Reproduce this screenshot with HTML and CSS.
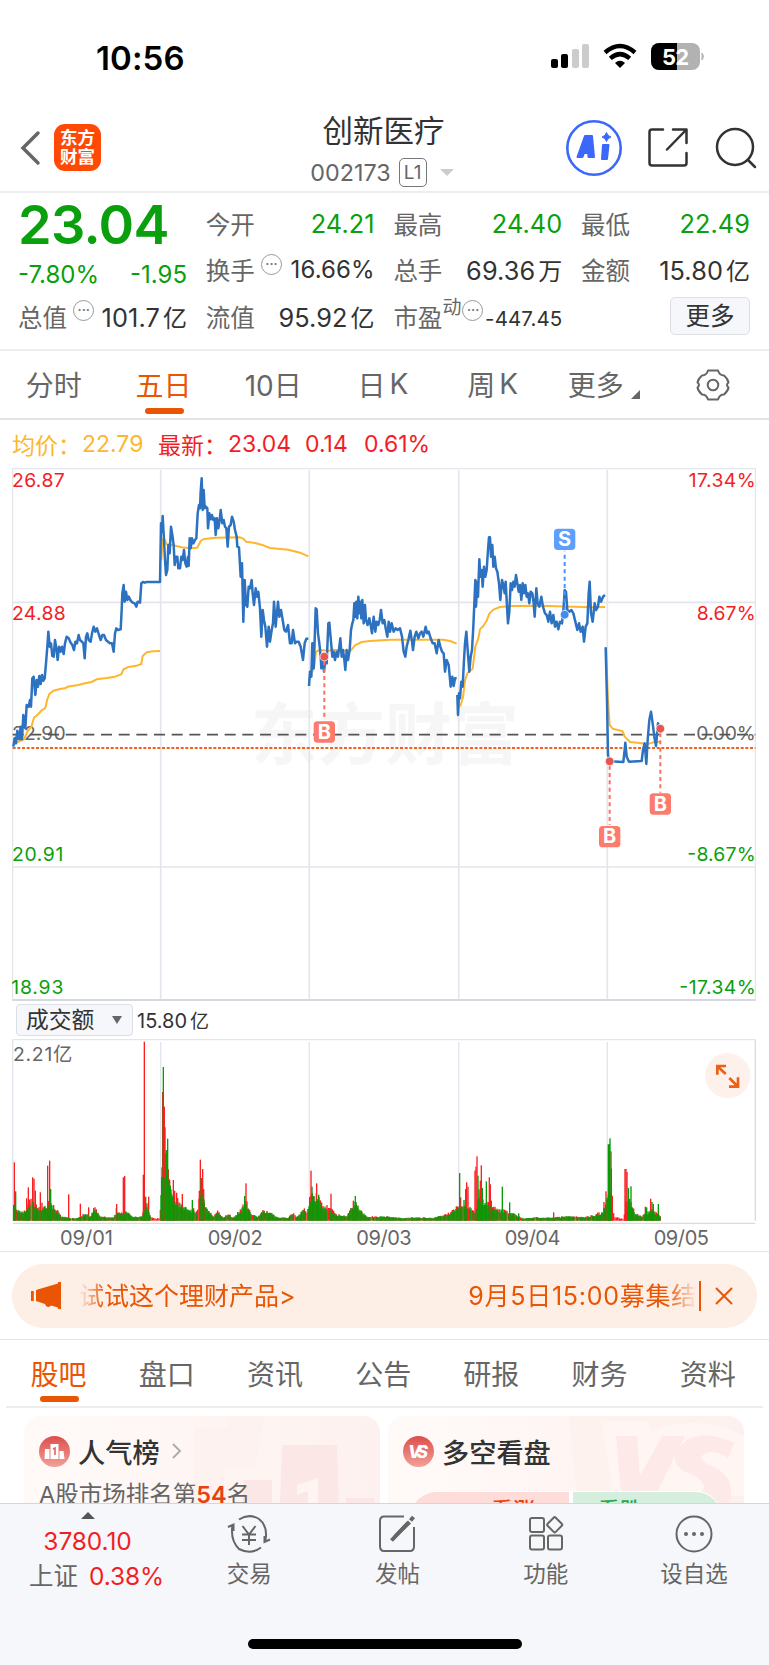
FILE: index.html
```html
<!DOCTYPE html>
<html lang="zh-CN">
<head>
    <meta charset="UTF-8">
    <meta name="viewport" content="width=device-width, initial-scale=1.0">
    <title>创新医疗 002173</title>
    <link rel="stylesheet" href="styles.css">
</head>
<body>

<div class="status-bar">
    <span class="time">10:56</span>
    <svg class="status-icons" width="156" height="32" viewBox="0 0 156 32">
        <rect x="0" y="18" width="7" height="9" rx="2"/>
        <rect x="10" y="13" width="7" height="14" rx="2"/>
        <rect x="21" y="8" width="7" height="19" rx="2" fill="#ccc"/>
        <rect x="31" y="3" width="7" height="24" rx="2" fill="#ccc"/>
        <g fill="none" stroke="#000" stroke-width="4.4">
            <path d="M54 11.500 Q69 -1.500 84 11.500"/>
            <path d="M59.300 17.300 Q69 9 78.700 17.300"/>
        </g>
        <path d="M64 22 Q69 17.500 74 22 L69 27 Z"/>
        <clipPath id="battery"><rect x="100" y="2" width="49" height="27" rx="8"/></clipPath>
        <g clip-path="url(#battery)">
            <rect x="100" y="2" width="49" height="27" fill="#b2b2b2"/>
            <rect x="100" y="2" width="26" height="27"/>
        </g>
        <path d="M151 12 Q154 15.500 151 19 Z" fill="#b2b2b2" stroke="#b2b2b2"/>
        <text x="111" y="23.500" class="battery-text" textLength="27">52</text>
    </svg>
</div>

<header class="header">
    <div class="header-left">
        <svg width="22" height="36" viewBox="0 0 22 36"><path d="M19 3 L4 18 L19 33" fill="none" stroke="#666" stroke-width="3.500" stroke-linecap="round"/></svg>
        <div class="logo">东方<br>财富</div>
    </div>
    <div class="header-title">
        <h1>创新医疗</h1>
        <div class="code"><span>002173</span><b>L1</b><i></i></div>
    </div>
    <div class="header-right">
        <svg width="56" height="56" viewBox="0 0 56 56">
            <circle cx="28" cy="28" r="26.700" fill="#fff" stroke="#3a68fb" stroke-width="2.600"/>
            <g fill="#3a68fb" stroke="#3a68fb" stroke-width="2" stroke-linejoin="round">
                <path fill-rule="evenodd" d="M11.500 37 L19 16 H26 L28 37 H22.500 L22.200 33 H18 L16.500 37 Z M20.500 28.500 H22 L21.800 24.500 Z"/>
                <path d="M37 25 H42.500 L41 39 H36 Z"/>
            </g>
            <path d="M40.500 12.500 Q41.500 16 45 17 Q41.500 18 40.500 21.500 Q39.500 18 36 17 Q39.500 16 40.500 12.500 Z" fill="#3a68fb" stroke="#3a68fb"/>
        </svg>
        <svg class="share" width="42" height="42" viewBox="0 0 42 42" fill="none" stroke="#333" stroke-width="2.500" stroke-linecap="round" stroke-linejoin="round">
            <path d="M16 2.500 H5 Q2.500 2.500 2.500 5 V36 Q2.500 38.500 5 38.500 H37 Q39.500 38.500 39.500 36 V26 M26 2.500 H39.500 V16 M39.500 2.500 L20 22.500"/>
        </svg>
        <svg width="42" height="42" viewBox="0 0 42 42" fill="none" stroke="#333" stroke-width="2.500" stroke-linecap="round">
            <circle cx="20" cy="20" r="18"/><path d="M33 33 L40 40"/>
        </svg>
    </div>
</header>

<section class="quote">
    <div class="price">23.04</div>
    <div class="cell green"><label>今开</label><span>24.21</span></div>
    <div class="cell green"><label>最高</label><span>24.40</span></div>
    <div class="cell green"><label>最低</label><span>22.49</span></div>

    <div class="cell change"><span>-7.80%</span><span>-1.95</span></div>
    <div class="cell small"><label>换手<em>···</em></label><span>16.66%</span></div>
    <div class="cell"><label>总手</label><span>69.36<small>万</small></span></div>
    <div class="cell"><label>金额</label><span>15.80<small>亿</small></span></div>

    <div class="cell"><label>总值<em>···</em></label><span>101.7<small>亿</small></span></div>
    <div class="cell"><label>流值</label><span>95.92<small>亿</small></span></div>
    <div class="cell pe"><label>市盈<sup>动</sup><em>···</em></label><span>-447.45</span></div>
    <div class="cell more"><button>更多</button></div>
</section>

<nav class="period-tabs">
    <a>分时</a>
    <a class="active">五日</a>
    <a>10日</a>
    <a>日<span>K</span></a>
    <a>周<span>K</span></a>
    <a class="dropdown">更多</a>
    <a>
        <svg width="34" height="34" viewBox="0 0 34 34" fill="none" stroke="#666" stroke-width="2" stroke-linejoin="round">
            <path d="M12 2.500 H22 Q23.500 7.500 28 7.500 Q32 11 32.500 14.500 Q29.500 17 32.500 19.500 Q32 23 28 26.500 Q23.500 26.500 22 31.500 H12 Q10.500 26.500 6 26.500 Q2 23 1.500 19.500 Q4.500 17 1.500 14.500 Q2 11 6 7.500 Q10.500 7.500 12 2.500 Z"/>
            <circle cx="17" cy="17" r="5.300"/>
        </svg>
    </a>
</nav>

<div class="legend">
    <span class="avg">均价：</span><span class="avg num1">22.79</span>
    <span class="last">最新：</span><span class="num2">23.04</span><span class="num3">0.14</span><span class="num4">0.61%</span>
</div>

<!-- 五日分时图 -->
<svg class="price-chart" width="769" height="533" viewBox="0 24 2307 1599">
    <text x="752" y="896" class="watermark" textLength="805">东方财富</text>
    <g stroke="#e2e5ec" fill="none" stroke-width="5">
        <path d="M38 24 V1623 M2266 24 V1623" stroke="#dde0e7" stroke-width="3"/>
        <path d="M38 25 H2266" stroke="#e6e7ec"/>
        <path d="M38 427 H2266 M38 1221 H2266 M482 30 V1616 M928 30 V1616 M1376 30 V1616 M1822 30 V1616" stroke-width="5"/>
        <path d="M38 1620 H2266" stroke="#d5d8df" stroke-width="6"/>
    </g>
    <g class="axis">
        <text x="36" y="82" fill="#f31e25" textLength="158">26.87</text>
        <text x="36" y="481" fill="#f31e25" textLength="161">24.88</text>
        <text x="36" y="840" fill="#666" textLength="161">22.90</text>
        <text x="36" y="1203" fill="#0a9f0d" textLength="154">20.91</text>
        <text x="34" y="1602" fill="#0a9f0d" textLength="156">18.93</text>
        <text x="2066" y="82" fill="#f31e25" textLength="201">17.34%</text>
        <text x="2090" y="481" fill="#f31e25" textLength="177">8.67%</text>
        <text x="2089" y="840" fill="#666" textLength="178">0.00%</text>
        <text x="2062" y="1203" fill="#0a9f0d" textLength="205">-8.67%</text>
        <text x="2038" y="1602" fill="#0a9f0d" textLength="229">-17.34%</text>
    </g>
    <path d="M38 824 H2266" stroke="#555" stroke-width="5" stroke-dasharray="33 20"/>
    <path d="M38 864 H2266" stroke="#ec6420" stroke-width="6" stroke-dasharray="9 5"/>

    <g fill="none" stroke="#fdb62e" stroke-width="6" stroke-linejoin="round">
        <polyline points="44,850 60,843 72,838 82,815 94,800 102,773 115,762 124,752 136,744 142,718 148,702 160,692 180,687 198,684 202,680 235,675 255,670 275,666 290,658 320,654 345,650 364,643 370,628 385,621 410,617 424,612 428,588 440,577 460,574 480,573"/>
        <polyline points="484,300 488,238 494,238 500,253 520,256 545,262 570,265 592,263 602,243 612,237 650,233 720,232 730,236 738,245 765,249 790,256 810,264 865,269 900,278 925,289"/>
        <g transform="translate(900)">
            <polyline points="27,660 33,640 42,625 48,575 60,570 85,572 100,569 135,572 152,572 165,556 185,546 210,543 270,539 430,539 450,543 470,551"/>
            <polyline points="472,745 482,735 489,712 495,662 503,638 518,626 526,560 535,535 540,508 550,498 560,482 568,461 580,449 600,441 640,438 720,437 820,440 880,442 915,441"/>
            <polyline points="918,562 924,720 929,795 938,806 968,814 974,830 990,846 1020,849 1040,853 1060,847 1080,845"/>
        </g>
    </g>
    <g fill="none" stroke="#2c72c0" stroke-width="7.500" stroke-linejoin="round">
        <polyline points="40,860 44,835 48,850 52,812 58,838 62,800 66,838 70,765 76,805 80,735 86,740 90,720 93,740 97,655 101,650 106,705 110,660 114,680 118,648 122,672 126,645 130,662 134,655 138,610 142,560 145,515 149,560 153,550 157,588 161,590 165,540 169,565 173,600 177,560 182,575 186,560 191,582 195,550 200,530 206,535 212,548 217,555 222,570 226,545 231,550 236,525 240,540 246,545 250,550 254,595 258,530 262,520 266,540 272,545 276,520 281,500 286,515 291,505 297,525 302,540 307,525 312,525 318,540 324,545 330,550 336,550 341,575 345,520 349,505 354,510 362,508 365,450 367,400 371,375 374,425 378,395 382,420 386,410 392,422 398,428 404,430 409,440 413,425 420,428 424,370 429,366 434,368 440,366 480,366 483,190 486,215 488,168 492,240 495,300 498,345 502,330 505,255 509,280 513,200 517,225 521,255 524,315 528,290 532,290 535,325 540,325 544,290 548,300 552,270 556,310 560,320 564,290 566,318 569,235 572,265 576,235 580,250 585,240 589,235 593,160 597,135 600,145 602,95 605,55 608,150 611,90 614,145 618,140 622,145 624,205 628,160 632,178 636,165 640,180 644,175 647,225 651,175 655,205 659,180 662,150 667,190 671,180 675,200 679,205 683,260 687,200 692,195 696,170 701,185 705,210 710,230 712,260 717,262 722,350 726,310 730,485 734,360 738,435 742,440 746,380 750,385 755,360 758,400 762,435 767,385 771,410 775,395 780,445 784,530 788,450 792,480 796,500 801,560 806,500 810,545 815,510 819,490 822,425 827,500 834,425 838,470 843,450 848,480 853,510 858,515 864,495 870,550 875,550 879,510 885,550 890,545 896,545 902,560 909,600 914,550 919,536 925,536"/>
        <g transform="translate(900)">
            <polyline points="27,678 30,635 34,650 37,550 41,625 44,540 47,445 50,448 54,520 58,550 62,590 64,625 68,600 72,635 76,600 80,610 85,490 88,488 93,545 97,590 101,575 105,600 110,575 114,590 118,560 121,535 125,590 129,570 133,600 136,630 140,570 144,600 149,570 153,510 157,490 160,480 163,430 166,470 169,425 172,475 175,410 179,460 181,425 184,475 187,420 191,490 195,435 198,480 203,495 208,475 212,495 216,520 221,470 226,515 230,485 235,495 239,480 243,450 248,490 253,480 257,505 262,530 266,485 270,515 275,490 281,515 287,505 293,510 300,505 306,530 311,575 316,590 320,560 325,540 331,512 336,545 339,570 344,530 349,515 355,535 360,520 365,515 370,530 377,500 381,520 386,515 392,535 398,550 404,550 410,580 416,540 421,560 426,575 431,580 435,635 440,600 446,615 452,680 457,650 461,678 465,655 470,655"/>
            <polyline points="472,705 474,765 477,700 480,715 484,665 488,680 492,600 495,550 499,515 503,570 508,635 512,590 516,570 520,500 523,430 526,360 528,440 532,365 534,410 538,298 541,350 545,330 548,380 552,320 556,350 560,330 564,270 567,232 570,232 573,290 577,255 580,320 584,290 588,325 592,335 597,370 601,420 606,360 610,375 614,400 617,365 621,440 624,490 628,455 632,370 636,390 640,365 644,380 648,345 652,370 656,395 660,375 664,420 668,370 672,400 676,375 680,410 684,400 688,430 692,395 697,400 701,430 704,470 709,385 713,430 718,440 724,410 729,440 735,460 740,465 745,485 750,455 755,490 760,465 765,500 770,485 775,508 780,485 786,490 791,440 794,390 798,395 802,450 808,455 814,450 820,460 826,485 832,510 837,490 842,515 848,500 852,545 857,500 862,490 866,400 869,365 873,460 878,485 884,430 888,450 894,440 898,410 903,425 909,410 915,405"/>
            <polyline points="917,562 921,720 924,885 929,904 970,906 974,870 976,848 980,890 987,905 1025,903 1029,870 1034,850 1039,912 1043,840 1048,780 1053,755 1058,790 1063,830 1068,858 1074,790 1078,800"/>
        </g>
    </g>

    <!-- 买卖点 -->
    <g transform="translate(900)" class="marks">
        <g class="buy">
            <path d="M73 604 V780 M929 917 V1095 M1081 819 V998"/>
            <circle cx="73" cy="590" r="13"/><circle cx="929" cy="904" r="13"/><circle cx="1081" cy="806" r="13"/>
            <rect x="41" y="784" width="64" height="64" rx="11"/><text x="73" y="836">B</text>
            <rect x="897" y="1098" width="64" height="64" rx="11"/><text x="929" y="1150">B</text>
            <rect x="1049" y="1000" width="64" height="64" rx="11"/><text x="1081" y="1052">B</text>
        </g>
        <g class="sell">
            <path d="M794 450 V272"/>
            <circle cx="794" cy="464" r="13"/>
            <rect x="762" y="206" width="64" height="64" rx="11"/><text x="794" y="259">S</text>
        </g>
    </g>
</svg>

<div class="volume-head">
    <button>成交额<i></i></button>
    <span>15.80<small>亿</small></span>
</div>

<!-- 成交额柱状图 -->
<svg class="volume-chart" width="769" height="212" viewBox="0 147 2307 636">
    <g stroke="#e2e5ec" fill="none" stroke-width="4">
        <path d="M38 149 H2266 M38 149 V692 M482 156 V692 M928 156 V692 M1376 156 V692 M1822 156 V692"/>
        <path d="M2266 149 V692 M38 700 H2266" stroke="#d8dbe1"/>
    </g>
    <g id="bars"></g>
    <g class="axis">
        <text x="39" y="213" fill="#666" textLength="178">2.21亿</text>
    </g>
    <g class="dates">
        <text x="180" y="765" textLength="159">09/01</text>
        <text x="623" y="765" textLength="165">09/02</text>
        <text x="1069" y="765" textLength="166">09/03</text>
        <text x="1514" y="765" textLength="167">09/04</text>
        <text x="1961" y="765" textLength="166">09/05</text>
    </g>
    <circle cx="2183" cy="257" r="68" fill="#fef1eb"/>
    <path d="M2152 254 V228 H2178 M2154 230 L2177 252 M2187 290 H2214 V262 M2212 288 L2188 264" fill="none" stroke="#ec6015" stroke-width="8"/>
</svg>

<div class="notice">
    <svg width="32" height="28" viewBox="0 0 32 28" fill="#ea5504"><path d="M0 9 H2.800 V19 H0 Z M5 8 L27 1.500 V0 H30 V27 H27 V25.500 L20 23.500 Q18 26 15 24 L14 22 L5 19 Z"/></svg>
    <p class="left-text">试试这个理财产品&gt;</p>
    <p class="right-text">9月5日15:00募集结</p>
    <svg class="close" width="20" height="20" viewBox="0 0 20 20"><path d="M2 2 L18 18 M18 2 L2 18" stroke="#ea5504" stroke-width="2"/></svg>
</div>

<nav class="info-tabs">
    <a class="active">股吧</a>
    <a>盘口</a>
    <a>资讯</a>
    <a>公告</a>
    <a>研报</a>
    <a>财务</a>
    <a>资料</a>
</nav>

<div class="cards">
    <div class="card">
        <svg class="card-bg" width="356" height="90" viewBox="0 0 356 90">
            <path d="M170 12 H204 V0 H240 L232 50 H200 V90 H170 Z M304 8 H332 L340 90 H308 Z" fill="#fdf2f0"/>
            <path d="M220 64 H248 V90 H218 Z M258 29 H313 L315 90 H256 Z M322 82 H350 V90 H322 Z" fill="#fbe7e5"/>
            <path d="M273 69 L294 62 V90 H284 V75 L273 79 Z" fill="#fef5f3"/>
        </svg>
        <h2>
            <svg width="31" height="31" viewBox="0 0 31 31">
                <linearGradient id="red" x2="0" y2="1"><stop stop-color="#db4f4b"/><stop offset="1" stop-color="#f2a099"/></linearGradient>
                <circle cx="15.500" cy="15.500" r="15.500" fill="url(#red)"/>
                <path d="M6 13 H10.500 V23 H5.500 Z M11.500 8 H19.500 V23 H11.500 Z M20.500 15 H24.500 L25.500 23 H20.500 Z" fill="#fff"/>
                <path d="M14 13 L16 12 V19" stroke="#dd6661" stroke-width="1.600" fill="none"/>
            </svg>
            人气榜
            <svg class="chevron" width="12" height="18" viewBox="0 0 12 18"><path d="M2 2 L9 9 L2 16" fill="none" stroke="#aaa" stroke-width="1.800"/></svg>
        </h2>
        <p>A股市场排名第<b>54</b>名</p>
    </div>
    <div class="card">
        <svg class="card-bg" width="356" height="90" viewBox="0 0 356 90">
            <path d="M181 0 H330 L356 24 V75 H188 Z" fill="#fef2ef"/>
            <path d="M213 5 H260 L264 16 Q310 -4 356 20 V80 H226 Z" fill="#fff6f3"/>
            <path d="M228 20 H249 L252 60 L274 20 H297 L262 90 H234 Z" fill="#fdeae8"/>
            <path d="M346 27 Q310 10 292 30 Q278 48 302 58 Q325 68 310 80 L340 90 Q350 64 328 52 Q302 42 322 36 Q330 35 340 42 Z" fill="#fdeae8"/>
        </svg>
        <h2>
            <svg width="31" height="31" viewBox="0 0 31 31">
                <circle cx="15.500" cy="15.500" r="15.500" fill="url(#red)"/>
                <text x="5" y="22" class="vs" textLength="20">VS</text>
            </svg>
            多空看盘
        </h2>
        <div class="vote"><span class="up">看涨</span><span class="down">看跌</span></div>
    </div>
</div>

<footer class="bottom-bar">
    <div class="index">
        <i></i>
        <strong>3780.10</strong>
        <div><span>上证</span><strong>0.38%</strong></div>
    </div>
    <div class="item">
        <svg width="44" height="40" viewBox="0 0 44 40" fill="none" stroke="#666" stroke-width="2">
            <path d="M12 5.500 Q22 -1 32 5 Q41 12 38.500 26 M43 25.500 L37.500 28 V22 M34 33.500 Q24 41 12 35 Q3 26 5.500 11 M1 13 L6.500 10.500 V17"/>
            <path d="M15.500 12 L22 20.500 L28.500 12 M22 20.500 V31 M15 20.500 H29 M15 26 H29"/>
        </svg>
        <span>交易</span>
    </div>
    <div class="item">
        <svg width="40" height="40" viewBox="0 0 40 40" fill="none" stroke="#666" stroke-width="2">
            <path d="M27 2.500 H7 Q3 2.500 3 7 V32 Q3 37 7 37 H33 Q37 37 37 32 V13"/>
            <path d="M31 6.500 L34 9.500 L19 24 L14.500 26.500 L17 21 Z" fill="#666" stroke="none"/><path d="M14.500 26.500 L31.500 8.500 M33.500 6.500 L36.500 3" stroke-width="4"/>
        </svg>
        <span>发帖</span>
    </div>
    <div class="item">
        <svg width="40" height="40" viewBox="0 0 40 40" fill="none" stroke="#666" stroke-width="2">
            <rect x="4" y="4" width="14" height="14" rx="2"/><rect x="4" y="21.500" width="14" height="14" rx="2"/><rect x="22" y="21.500" width="14" height="14" rx="2"/>
            <rect x="23" y="5" width="11.500" height="11.500" rx="1.500" transform="rotate(45 28.700 10.700)"/>
        </svg>
        <span>功能</span>
    </div>
    <div class="item">
        <svg width="40" height="40" viewBox="0 0 40 40" fill="none" stroke="#666" stroke-width="2">
            <circle cx="20" cy="20" r="17.500"/>
            <g fill="#666" stroke="none"><circle cx="12" cy="20" r="2"/><circle cx="20" cy="20" r="2"/><circle cx="28" cy="20" r="2"/></g>
        </svg>
        <span>设自选</span>
    </div>
    <div class="home-bar"></div>
</footer>

<script src="script.js"></script>
</body>
</html>
```
FILE: styles.css
```css
body {
    margin: 0;
    width: 769px;
    height: 1665px;
    display: flex;
    flex-direction: column;
    overflow: hidden;
    background: #fff;
    color: #333;
    font-family: Inter, "Noto Sans CJK SC", sans-serif;
    font-weight: 400;
}

body > * {
    flex: none;
    box-sizing: border-box;
}

h1, h2, p {
    margin: 0;
    font-weight: 400;
}

i, em {
    font-style: normal;
}

svg {
    display: block;
}

svg text {
    font-family: Inter, "Noto Sans CJK SC", sans-serif;
}

/* 状态栏 */
.status-bar {
    height: 110px;
    padding: 41px 62px 0 96px;
    display: flex;
    justify-content: space-between;
}

.time {
    font-size: 33px;
    line-height: 35px;
    font-weight: 600;
    color: #000;
    letter-spacing: 0.1px;
}

.battery-text {
    font-size: 22px;
    font-weight: 700;
    fill: #fff;
}

/* 顶部标题 */
.header {
    height: 83px;
    border-bottom: 2px solid #ededed;
    display: grid;
    grid-template-columns: 250px 1fr 250px;
}

.header-left {
    display: flex;
    align-items: center;
    padding: 0 0 6px 19px;
    gap: 13px;
}

.logo {
    width: 47px;
    height: 47px;
    box-sizing: border-box;
    padding-top: 4px;
    border-radius: 11px;
    background: #ff4a06;
    color: #fff;
    font-size: 17.5px;
    font-weight: 700;
    line-height: 19px;
    text-align: center;
}

.header-title {
    text-align: center;
}

.header-title h1 {
    margin: 2px 0 0 -2px;
    font-size: 30.5px;
    line-height: 38px;
}

.code {
    margin: 6px 0 0 -5px;
    display: flex;
    justify-content: center;
    align-items: center;
    height: 32px;
    font-size: 23.3px;
    color: #666;
}

.code b {
    box-sizing: border-box;
    width: 28px;
    height: 29px;
    margin: 0 13px 0 8px;
    border: 1.5px solid #777;
    border-radius: 5px;
    font-size: 19px;
    line-height: 27px;
    font-weight: 400;
}

.code i {
    border: 7px solid transparent;
    border-top: 7px solid #ccc;
    border-bottom: 0;
}

.header-right {
    display: flex;
    align-items: center;
    justify-content: flex-end;
    padding: 0 12px 5px 0;
    gap: 26px;
}

.share {
    margin-left: -1px;
}

/* 行情数据 */
.quote {
    height: 158px;
    padding: 7px 19px 0 18px;
    border-bottom: 2px solid #ededed;
    display: grid;
    grid-template-columns: repeat(4, 169px);
    grid-template-rows: repeat(3, 46.5px);
    column-gap: 18.7px;
}

.price {
    font-size: 54px;
    line-height: 50px;
    font-weight: 600;
    color: #0a9f0d;
    letter-spacing: -0.7px;
}

.cell {
    display: flex;
    justify-content: space-between;
    align-items: center;
    font-size: 25.3px;
    letter-spacing: 0.1px;
    white-space: nowrap;
}

.cell label {
    display: flex;
    align-items: center;
    font-size: 24.5px;
    color: #666;
    letter-spacing: 0;
}

.cell small {
    font-size: 24px;
    margin-left: 3px;
}

.cell em {
    width: 19px;
    height: 19px;
    margin: -11px 0 0 6px;
    border: 1.5px solid #999;
    border-radius: 50%;
    font-size: 16px;
    line-height: 18px;
    text-align: center;
    color: #777;
    letter-spacing: -0.5px;
}

.cell sup {
    font-size: 19px;
    line-height: 20px;
    margin-top: -16px;
}

.pe em {
    margin-left: 1px;
}

.cell.green span, .change {
    color: #0a9f0d;
}

.change {
    padding-top: 10px;
    font-size: 24px;
    letter-spacing: 0;
}

.small span {
    font-size: 24px;
}

.pe span {
    font-size: 20.5px;
    padding-top: 4px;
}

.more {
    justify-content: flex-end;
}

.more button {
    width: 80px;
    height: 38px;
    padding: 0;
    border: 1.5px solid #dcdfe6;
    border-radius: 5px;
    background: #f6f7fa;
    color: #333;
    font: 24.5px/34px Inter, "Noto Sans CJK SC", sans-serif;
}

/* 周期切换 */
.period-tabs {
    height: 69px;
    border-bottom: 2px solid #e2e3e8;
    display: grid;
    grid-template-columns: repeat(7, 109.7px);
}

.period-tabs a, .info-tabs a {
    position: relative;
    display: flex;
    justify-content: center;
    align-items: center;
    font-size: 28px;
    color: #666;
}

.period-tabs a {
    padding-right: 2px;
    padding-bottom: 2px;
}

.period-tabs a:last-child {
    padding: 0;
}

.period-tabs a span {
    margin-left: 4px;
}

a.active {
    color: #ea5504;
}

a.active::after {
    content: "";
    position: absolute;
    left: 50%;
    bottom: 4px;
    width: 39px;
    height: 6px;
    margin-left: -20px;
    border-radius: 3px;
    background: #ea5504;
}

.dropdown::after {
    content: "";
    margin: 22px -3px 0 7px;
    border-left: 9px solid transparent;
    border-bottom: 9px solid #666;
}

.legend {
    height: 48px;
    padding-left: 12px;
    display: flex;
    align-items: center;
    font-size: 23px;
    color: #f31e25;
    white-space: nowrap;
}

.legend .avg {
    color: #fdb62e;
}

.legend .avg, .legend .last {
    width: 70px;
}

.legend .num1 {
    width: 76px;
}

.num2 {
    width: 77px;
}

.num3 {
    width: 59px;
}

/* 图表 */
.watermark {
    font-size: 200px;
    font-weight: 700;
    fill: #f6f6f6;
}

.axis {
    font-size: 58px;
}

.dates {
    font-size: 60px;
    fill: #666;
}

.marks path {
    stroke-width: 6;
    stroke-dasharray: 12 10;
}

.marks circle {
    stroke: #fff;
    stroke-opacity: 0.7;
    stroke-width: 3;
}

.marks text {
    font-size: 60px;
    font-weight: 700;
    fill: #fff;
    text-anchor: middle;
}

.buy path {
    stroke: #fb7061;
}

.buy circle {
    fill: #e85550;
}

.buy rect {
    fill: #fd7b6b;
}

.sell path {
    stroke: #4795fb;
}

.sell circle {
    fill: #418bf2;
}

.sell rect {
    fill: #5c9ffc;
}

.volume-head {
    height: 38px;
    padding: 3px 0 0 16px;
    display: flex;
    gap: 4px;
    font-size: 20px;
    line-height: 34px;
}

.volume-head small {
    font-size: 19px;
    margin-left: 3px;
}

.volume-head button {
    display: flex;
    align-items: center;
    width: 117px;
    height: 32px;
    padding: 0 0 0 9px;
    border: 1.5px solid #dcdfe6;
    border-radius: 4px;
    background: #f6f7fa;
    color: #333;
    font: 22.8px/28px Inter, "Noto Sans CJK SC", sans-serif;
}

.volume-head i {
    margin-left: 18px;
    border: 5px solid transparent;
    border-top: 8px solid #666;
    border-bottom: 0;
}

.volume-chart {
    box-shadow: 0 1px 0 #e6e6e8;
}

/* 公告条 */
.notice {
    height: 64px;
    margin: 13px 12px 11px;
    padding: 0 23px 0 19px;
    border-radius: 32px;
    background: #fdeee6;
    color: #ea5504;
    font-size: 25px;
    display: flex;
    align-items: center;
}

.notice p {
    height: 40px;
    line-height: 40px;
    overflow: hidden;
    white-space: nowrap;
}

.left-text {
    margin-left: 16px;
    -webkit-mask-image: linear-gradient(to right, transparent, #000 26px);
    mask-image: linear-gradient(to right, transparent, #000 26px);
}

.right-text {
    margin-left: auto;
    letter-spacing: 0.75px;
    -webkit-mask-image: linear-gradient(to left, transparent, #000 30px);
    mask-image: linear-gradient(to left, transparent, #000 30px);
}

.close {
    height: 20px;
    margin-left: 2px;
    padding: 5px 0 5px 13px;
    border-left: 2px solid #ea5504;
}

.info-tabs {
    height: 69px;
    margin: 0 6px;
    border-bottom: 2px solid #ededed;
    display: grid;
    grid-template-columns: repeat(7, 108.2px);
    position: relative;
}

.info-tabs a {
    padding-right: 3px;
}

.info-tabs::before {
    content: "";
    position: absolute;
    top: 0;
    left: -6px;
    width: 769px;
    height: 1px;
    background: #e3e3e5;
}

/* 卡片 */
.cards {
    flex: 1;
    min-height: 0;
    overflow: hidden;
    padding: 8px 25px 0 24px;
    display: grid;
    grid-template-columns: 356px 356px;
    gap: 8px;
}

.card {
    position: relative;
    height: 120px;
    overflow: hidden;
    border-radius: 16px;
    background: linear-gradient(to right, #fffaf8, #fdf1ef);
}

.card-bg {
    position: absolute;
    left: 0;
    top: 0;
}

.card h2 {
    position: relative;
    display: flex;
    align-items: center;
    height: 70px;
    padding-left: 15px;
    gap: 8px;
    font-size: 27.2px;
    font-weight: 500;
}

.chevron {
    margin-left: 3px;
}

.vs {
    font-size: 17px;
    font-weight: 800;
    font-style: italic;
    fill: #fff;
}

.card p {
    position: relative;
    margin: -7px 0 0 15px;
    font-size: 23.5px;
    line-height: 32px;
    color: #666;
}

.card p b {
    font-weight: 600;
    color: #e8400e;
}

.vote {
    position: relative;
    display: flex;
    gap: 4px;
    margin: 5px 22px 0;
    border: 1.5px solid #fff;
    border-radius: 26px;
    overflow: hidden;
    background: #fff;
    font-size: 22px;
    font-weight: 500;
    text-align: center;
}

.vote span {
    box-sizing: border-box;
    height: 50px;
    line-height: 37px;
    background: #fddcd9;
    color: #e8400e;
}

.vote .up {
    width: 158px;
    padding-left: 46px;
}

.vote .down {
    flex: 1;
    padding-right: 54px;
    background: #d5eedd;
    color: #27a84f;
}

/* 底部栏 */
.bottom-bar {
    position: relative;
    height: 162px;
    border-top: 1.5px solid #d3d6de;
    background: #f6f7fa;
    display: grid;
    grid-template-columns: 175px repeat(4, 148.3px);
    color: #666;
}

.index {
    text-align: center;
    font-size: 24.5px;
    padding-top: 8px;
}

.index i {
    display: block;
    width: 0;
    margin: 0 auto;
    border: 7px solid transparent;
    border-bottom: 7px solid #555;
    border-top: 0;
}

.index strong {
    display: block;
    font-weight: 400;
    line-height: 44px;
    color: #f31e25;
    letter-spacing: -0.1px;
}

.index div {
    display: flex;
    justify-content: center;
    gap: 11px;
    line-height: 26px;
    padding-left: 18px;
}

.index div strong {
    line-height: 26px;
}

.item {
    display: flex;
    flex-direction: column;
    align-items: center;
    padding-top: 10px;
    font-size: 22.5px;
    line-height: 40px;
}

.home-bar {
    position: absolute;
    left: 248px;
    bottom: 16px;
    width: 274px;
    height: 10px;
    border-radius: 5px;
    background: #000;
}
```
FILE: script.js
```js
const RED = '#fb1f22';
const GREEN = '#069c06';
const BASE = 692;

// 成交额轮廓: [x, 高度]
const base = [
    [40, 70], [50, 35], [70, 25], [85, 55], [100, 60], [120, 35], [150, 55], [165, 40], [185, 12], [230, 6],
    [260, 24], [270, 12], [285, 45], [300, 12], [340, 8], [350, 38], [362, 20], [378, 35], [395, 12], [425, 12],
    [440, 50], [452, 10], [480, 6], [486, 200], [502, 180], [512, 90], [530, 65], [550, 45], [570, 35], [592, 30],
    [604, 100], [620, 38], [640, 12], [652, 28], [670, 8], [685, 22], [700, 8], [725, 38], [738, 60], [752, 20],
    [775, 12], [790, 32], [815, 24], [830, 10], [865, 8], [875, 26], [890, 10], [910, 34], [920, 30], [935, 85],
    [950, 75], [970, 45], [990, 40], [1010, 18], [1040, 15], [1066, 60], [1085, 30], [1100, 12], [1160, 12],
    [1210, 6], [1230, 10], [1300, 8], [1340, 18], [1370, 40], [1400, 50], [1425, 30], [1440, 75], [1455, 55],
    [1480, 40], [1510, 30], [1530, 25], [1545, 20], [1570, 5], [1600, 10], [1660, 8], [1700, 14], [1750, 10],
    [1780, 16], [1810, 28], [1820, 80], [1834, 90], [1842, 12], [1870, 5], [1880, 70], [1895, 50], [1905, 20],
    [1925, 14], [1940, 25], [1955, 35], [1970, 22], [1983, 12]
];

// 放量柱: [x, 高度, 是否上涨]
const peaks = [
    [43, 175, 1], [47, 88, 0], [80, 67, 1], [85, 100, 1], [98, 130, 1], [102, 126, 1], [106, 90, 1], [121, 85, 1], [126, 54, 1],
    [143, 165, 1], [149, 180, 1], [152, 95, 0], [206, 79, 1], [241, 51, 1], [266, 40, 1], [350, 50, 1],
    [370, 130, 1], [374, 134, 1], [430, 138, 1], [433, 537, 1], [437, 72, 0], [446, 72, 1],
    [486, 160, 1], [488, 386, 1], [493, 342, 1], [495, 280, 1], [490, 461, 0], [499, 212, 0], [503, 246, 0], [507, 125, 0], [511, 105, 0],
    [520, 122, 1], [524, 90, 1], [530, 84, 1], [547, 80, 1], [577, 62, 0], [598, 90, 1], [601, 183, 1], [608, 155, 1], [611, 95, 1], [604, 128, 0],
    [738, 112, 1], [734, 74, 0], [933, 150, 1], [936, 102, 0], [950, 112, 1], [956, 78, 0], [993, 81, 1],
    [1060, 60, 1], [1066, 74, 0], [1379, 143, 0], [1382, 70, 1], [1392, 62, 0], [1397, 95, 1], [1400, 115, 1], [1404, 102, 1],
    [1425, 150, 1], [1428, 162, 1], [1431, 193, 1], [1434, 135, 0], [1441, 120, 1], [1444, 166, 1], [1437, 94, 0], [1447, 98, 0],
    [1459, 118, 0], [1468, 130, 1], [1471, 109, 1], [1474, 60, 1], [1507, 102, 0], [1529, 55, 0],
    [1556, 22, 0], [1482, 32, 1], [1790, 20, 1], [1798, 14, 1], [1791, 17, 0], [1812, 56, 1], [1818, 88, 1],
    [1882, 32, 1], [1882, 30, 1], [1960, 50, 1], [1975, 50, 0], [1859, 5, 1], [1661, 25, 1],
    [1833, 208, 1], [1837, 75, 1], [1825, 229, 0], [1828, 230, 0], [1830, 247, 0], [1834, 156, 0],
    [1875, 155, 1], [1878, 155, 1], [1881, 146, 1], [1885, 98, 0], [1889, 66, 0], [1893, 103, 0],
    [1936, 42, 1], [1940, 40, 0], [1952, 66, 1], [1956, 56, 0]
];

let out = '';

function bar(x, h, up) {
    out += `<rect x="${x - 2}" y="${BASE - h}" width="4" height="${h}" fill="${up ? RED : GREEN}"/>`;
}

function outline(x) {
    let k = 0;
    while (k < base.length - 2 && base[k + 1][0] < x) k++;
    const [x0, h0] = base[k];
    const [x1, h1] = base[k + 1];
    return h0 + (h1 - h0) * (x - x0) / (x1 - x0);
}

function onlyRed(x) {
    return (x > 450 && x < 482) || (x > 592 && x < 600) || (x > 1838 && x < 1882);
}

let seed = 7;
function next() {
    seed = (seed * 137 + 71) % 1009;
    return seed / 1009;
}

for (let x = 41; x < 1984; x += 4) {
    bar(x, outline(x) * (0.7 + next() * 0.45), 1);
}
peaks.filter((p) => p[2]).forEach(([x, h]) => bar(x, h, 1));
for (let x = 42; x < 1984; x += 3) {
    const r = next();
    if (!onlyRed(x) && r > 0.14) bar(x, outline(x) * (0.55 + r * 0.4) + 2, 0);
}
peaks.filter((p) => !p[2]).forEach(([x, h]) => bar(x, h, 0));

document.getElementById('bars').innerHTML = out;
```
